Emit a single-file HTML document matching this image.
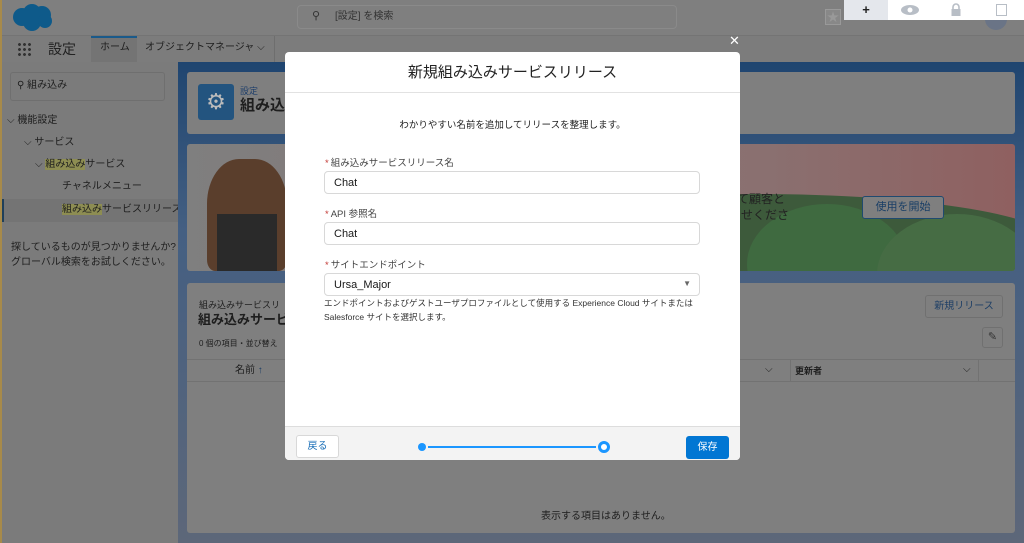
<!DOCTYPE html>
<html><head><meta charset="utf-8"><style>
*{box-sizing:border-box;margin:0;padding:0}
body{width:1024px;height:543px;overflow:hidden;position:relative;background:#7f7f7f;font-family:"Liberation Sans","Noto Sans CJK JP",sans-serif;color:#222}
.a{position:absolute}
.t{font-size:11px;color:#1e1e1e;white-space:nowrap;line-height:1.2}
.inp{position:absolute;left:39px;width:376px;height:23px;border:1px solid #d8d8d8;border-radius:4px;background:#fff;font-size:11px;padding:5px 9px;color:#181818;line-height:1.1}
.lbl{position:absolute;left:40px;font-size:9.5px;color:#444;line-height:1}
.lbl b{color:#c23934;font-weight:normal;margin-right:2px}
</style></head><body>
<div class="a" style="left:0;top:0;width:1024px;height:35px;background:#7f7f7f"></div>
<div class="a" style="left:0;top:0;width:2px;height:543px;background:#a78a4a"></div>
<svg class="a" style="left:10px;top:2px" width="44" height="30"><g fill="#0e5a8a"><circle cx="12" cy="15" r="9"/><circle cx="22" cy="11" r="9"/><circle cx="32" cy="13" r="9"/><circle cx="22" cy="20" r="9"/><circle cx="35" cy="19" r="7"/></g></svg>
<div class="a" style="left:297px;top:5px;width:380px;height:24px;border:1px solid #8a8a8a;border-radius:4px;background:#7f7f7f"></div>
<div class="a t" style="left:312px;top:10px;color:#333">⚲</div>
<div class="a t" style="left:335px;top:11px;font-size:10px;color:#333">[設定] を検索</div>
<div class="a" style="left:825px;top:9px;width:16px;height:16px;border:1px solid #999;background:#888;color:#999;font-size:12px;text-align:center;line-height:14px">★</div>
<div class="a" style="left:985px;top:8px;width:22px;height:22px;border-radius:50%;background:#6a7486"></div>
<div class="a" style="left:844px;top:0;width:180px;height:20px;background:#fff"></div>
<div class="a" style="left:844px;top:0;width:44px;height:20px;background:#e4e7ec;text-align:center;font-size:13px;line-height:19px;font-weight:bold">+</div>
<svg class="a" style="left:900px;top:4px" width="20" height="12"><ellipse cx="10" cy="6" rx="9" ry="5" fill="#b8bec6"/><circle cx="10" cy="6" r="2.5" fill="#fff"/></svg>
<svg class="a" style="left:950px;top:3px" width="12" height="13"><path d="M3 6V4a3 3 0 0 1 6 0v2" stroke="#b8bec6" stroke-width="1.6" fill="none"/><rect x="1.5" y="6" width="9" height="7" fill="#b8bec6"/></svg>
<div class="a" style="left:996px;top:4px;width:11px;height:12px;border:1.5px solid #b8bec6"></div>
<div class="a" style="left:2px;top:35px;width:1022px;height:27px;background:#7c7c7c;border-top:1px solid #747474"></div>
<div class="a" style="left:17px;top:42px;width:15px;height:15px;background:radial-gradient(circle,#333 1.3px,transparent 1.6px) 0 0/5px 5px"></div>
<div class="a" style="left:48px;top:39px;font-size:14px;color:#222">設定</div>
<div class="a" style="left:91px;top:36px;width:46px;height:26px;background:#747474;border-top:2px solid #1a5a8a"></div>
<div class="a t" style="left:100px;top:42px;font-size:10px">ホーム</div>
<div class="a t" style="left:145px;top:42px;font-size:10px">オブジェクトマネージャ ⌵</div>
<div class="a" style="left:274px;top:36px;width:1px;height:26px;background:#6e6e6e"></div>
<div class="a" style="left:2px;top:62px;width:176px;height:481px;background:#7b7b7b"></div>
<div class="a" style="left:10px;top:72px;width:155px;height:29px;border:1px solid #6f6f6f;border-radius:3px"></div>
<div class="a t" style="left:17px;top:80px;font-size:10px">⚲ 組み込み</div>
<div class="a t" style="left:7px;top:115px;font-size:10px">⌵ 機能設定</div>
<div class="a t" style="left:24px;top:137px;font-size:10px">⌵ サービス</div>
<div class="a t" style="left:35px;top:159px;font-size:10px">⌵ <span style="background:#8d8d52">組み込み</span>サービス</div>
<div class="a t" style="left:62px;top:181px;font-size:10px">チャネルメニュー</div>
<div class="a" style="left:2px;top:199px;width:176px;height:23px;background:#747474;border-left:2px solid #1f3f5a"></div>
<div class="a t" style="left:62px;top:204px;font-size:10px"><span style="background:#8d8d52">組み込み</span>サービスリリース</div>
<div class="a t" style="left:11px;top:242px;font-size:10px">探しているものが見つかりませんか?</div>
<div class="a t" style="left:11px;top:257px;font-size:10px">グローバル検索をお試しください。</div>
<div class="a" style="left:178px;top:62px;width:846px;height:481px;background:linear-gradient(#1f4570,#445f82 35%,#5d6779)"></div>
<div class="a" style="left:187px;top:72px;width:828px;height:62px;background:#7f7f7f;border-radius:3px"></div>
<div class="a" style="left:198px;top:84px;width:36px;height:36px;background:#23547f;border-radius:3px;color:#bbb;font-size:22px;text-align:center;line-height:36px">⚙</div>
<div class="a t" style="left:240px;top:86px;font-size:9px;color:#1f3f6a">設定</div>
<div class="a t" style="left:240px;top:97px;font-size:15px;font-weight:bold">組み込</div>
<div class="a" style="left:187px;top:144px;width:828px;height:127px;background:linear-gradient(90deg,#7f7f7f,#8a7070 70%,#8f6060);border-radius:3px;overflow:hidden">
 <div class="a" style="left:270px;top:50px;width:600px;height:100px;border-radius:50%;background:#3d5a3b"></div>
 <div class="a" style="left:560px;top:60px;width:160px;height:120px;border-radius:50%;background:#3f6a40"></div>
 <div class="a" style="left:690px;top:70px;width:160px;height:120px;border-radius:50%;background:#466c44"></div>
 <div class="a" style="left:20px;top:15px;width:80px;height:112px;border-radius:40% 40% 10% 10%;background:#5a3e2c"></div>
 <div class="a" style="left:30px;top:70px;width:60px;height:57px;background:#2a2a2a"></div>
</div>
<div class="a t" style="left:737px;top:192px;font-size:12px;color:#222">て顧客と</div>
<div class="a t" style="left:741px;top:208px;font-size:12px;color:#222">せくださ</div>
<div class="a" style="left:862px;top:196px;width:82px;height:23px;border:1px solid #1f4a70;background:#7f7f7f;border-radius:3px;color:#1a3f66;font-size:11px;text-align:center;line-height:21px">使用を開始</div>
<div class="a" style="left:187px;top:283px;width:828px;height:250px;background:#7f7f7f;border-radius:3px"></div>
<div class="a t" style="left:199px;top:300px;font-size:9px">組み込みサービスリ</div>
<div class="a t" style="left:198px;top:312px;font-size:13px;font-weight:bold">組み込みサービ</div>
<div class="a t" style="left:199px;top:339px;font-size:8px">0 個の項目・並び替え</div>
<div class="a" style="left:925px;top:295px;width:78px;height:23px;border:1px solid #707070;border-radius:3px;color:#1e3f66;font-size:10px;text-align:center;line-height:21px">新規リリース</div>
<div class="a" style="left:982px;top:327px;width:21px;height:21px;border:1px solid #707070;border-radius:3px;text-align:center;font-size:11px;line-height:19px;color:#333">✎</div>
<div class="a" style="left:187px;top:359px;width:828px;height:23px;border-top:1px solid #727272;border-bottom:1px solid #727272"></div>
<div class="a t" style="left:235px;top:365px;font-size:10px">名前 <span style="color:#1e3f66">↑</span></div>
<div class="a t" style="left:765px;top:364px;font-size:10px">⌵</div>
<div class="a" style="left:790px;top:360px;width:1px;height:22px;background:#727272"></div>
<div class="a t" style="left:795px;top:366px;font-size:9px;font-weight:bold">更新者</div>
<div class="a t" style="left:963px;top:364px;font-size:10px">⌵</div>
<div class="a" style="left:978px;top:360px;width:1px;height:22px;background:#727272"></div>
<div class="a t" style="left:541px;top:511px;font-size:10px">表示する項目はありません。</div>
<div class="a" style="left:729px;top:33px;color:#fff;font-size:13px">✕</div>
<div class="a" style="left:285px;top:52px;width:455px;height:408px;background:#fff;border-radius:4px;overflow:hidden">
 <div class="a" style="left:0;top:0;width:455px;height:41px;border-bottom:1px solid #e2e2e2;text-align:center;font-size:15px;line-height:41px;color:#222">新規組み込みサービスリリース</div>
 <div class="a t" style="left:0;width:455px;top:68px;text-align:center;font-size:9.5px">わかりやすい名前を追加してリリースを整理します。</div>
 <div class="lbl" style="top:107px"><b>*</b>組み込みサービスリリース名</div>
 <div class="inp" style="top:119px">Chat</div>
 <div class="lbl" style="top:158px"><b>*</b>API 参照名</div>
 <div class="inp" style="top:170px">Chat</div>
 <div class="lbl" style="top:209px"><b>*</b>サイトエンドポイント</div>
 <div class="inp" style="top:221px">Ursa_Major<span style="position:absolute;right:8px;top:6px;font-size:8px;color:#666">▼</span></div>
 <div class="a t" style="left:39px;top:246px;font-size:8.5px;color:#333">エンドポイントおよびゲストユーザプロファイルとして使用する Experience Cloud サイトまたは</div>
 <div class="a t" style="left:39px;top:260px;font-size:8.5px;color:#333">Salesforce サイトを選択します。</div>
 <div class="a" style="left:0;top:374px;width:455px;height:34px;background:#f3f3f3;border-top:1px solid #ddd"></div>
 <div class="a" style="left:11px;top:383px;width:43px;height:23px;background:#fff;border:1px solid #d8d8d8;border-radius:3px;font-size:10px;color:#1b6fb8;text-align:center;line-height:21px">戻る</div>
 <div class="a" style="left:133px;top:391px;width:8px;height:8px;border-radius:50%;background:#1b96ff"></div>
 <div class="a" style="left:143px;top:394px;width:168px;height:2px;background:#1b96ff"></div>
 <div class="a" style="left:313px;top:389px;width:12px;height:12px;border-radius:50%;border:3px solid #1b96ff;background:#fff"></div>
 <div class="a" style="left:401px;top:384px;width:43px;height:23px;background:#0176d3;border-radius:3px;font-size:10px;color:#fff;text-align:center;line-height:23px">保存</div>
</div>
</body></html>
